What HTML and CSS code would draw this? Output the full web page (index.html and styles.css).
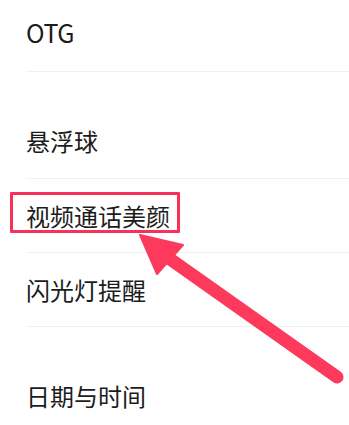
FILE: index.html
```html
<!DOCTYPE html>
<html lang="zh-CN">
<head>
<meta charset="utf-8">
<link rel="stylesheet" href="styles.css">
</head>
<body>
<div class="page">
  <ul class="list">
    <li class="item item-otg"><span class="label latin">OTG</span></li>
    <li class="item item-tall"><span class="label">悬浮球</span></li>
    <li class="item item-mid"><span class="label">视频通话美颜</span></li>
    <li class="item item-mid"><span class="label">闪光灯提醒</span></li>
    <li class="item item-last"><span class="label">日期与时间</span></li>
  </ul>
  <div class="highlight"></div>
  <svg class="arrow" width="349" height="425" viewBox="0 0 349 425">
    <line x1="337" y1="377" x2="170" y2="259" stroke="#fd3a5b" stroke-width="13" stroke-linecap="round"/>
    <polygon points="140,235 183,245 157,274" fill="#fd3a5b" stroke="#fd3a5b" stroke-width="2" stroke-linejoin="round"/>
  </svg>
</div>
</body>
</html>
```

FILE: styles.css
```css
html, body {
  margin: 0;
  padding: 0;
  background: #ffffff;
}

.page {
  position: relative;
  width: 349px;
  height: 425px;
  overflow: hidden;
  font-family: "Noto Sans CJK SC", "Noto Sans", sans-serif;
  color: #1c1c1c;
}

.list {
  list-style: none;
  margin: 0;
  padding: 0;
  display: flex;
  flex-direction: column;
}

.item {
  display: flex;
  align-items: center;
  margin-left: 26px;
  border-bottom: 1px solid #f1f1f1;
  box-sizing: border-box;
}

.label {
  font-size: 24px;
  line-height: 1;
  white-space: nowrap;
}

.latin {
  font-size: 25px;
  letter-spacing: -0.5px;
}

.item-otg {
  height: 72px;
  padding-bottom: 6px;
}

.item-tall {
  height: 107px;
  padding-top: 31px;
}

.item-mid {
  height: 74px;
}

.item-mid:first-of-type {
  padding-bottom: 4px;
}

.item-last {
  height: 99px;
  padding-top: 38px;
  border-bottom: none;
}

.highlight {
  position: absolute;
  left: 10px;
  top: 192px;
  width: 170px;
  height: 41px;
  box-sizing: border-box;
  border: 3px solid #f7325a;
  border-radius: 1px;
}

.arrow {
  position: absolute;
  left: 0;
  top: 0;
}
```
